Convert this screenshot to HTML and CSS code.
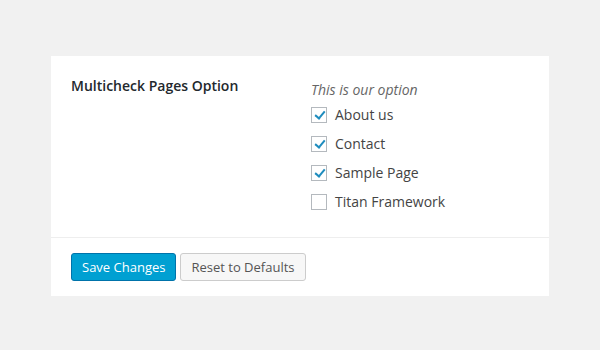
FILE: index.html
```html
<!DOCTYPE html>
<html lang="en">

<head>
    <meta charset="UTF-8">
    <meta name="viewport" content="width=device-width, initial-scale=1.0">
    <title>Multicheck Option</title>
    <link rel="stylesheet" href="styles.css">
</head>

<body>
    <div class="panel">
        <div class="option-row">
            <div class="option-label">Multicheck Pages Option</div>
            <div class="option-field">
                <p class="description">This is our option</p>
                <label class="check"><span class="box checked"></span>About us</label>
                <label class="check"><span class="box checked"></span>Contact</label>
                <label class="check"><span class="box checked"></span>Sample Page</label>
                <label class="check"><span class="box"></span>Titan Framework</label>
            </div>
        </div>
        <div class="actions">
            <button class="btn btn-primary">Save Changes</button>
            <button class="btn">Reset to Defaults</button>
        </div>
    </div>
</body>

</html>
```

FILE: styles.css
```css
body {
    margin: 0;
    padding: 56px 51px 0;
    background-color: #f1f1f1;
    font-family: "Open Sans", sans-serif;
    font-size: 14px;
    color: #444;
}

.panel {
    background-color: white;
}

.option-row {
    display: flex;
    padding: 20px 20px 21px;
    border-bottom: 1px solid #eee;
}

.option-label {
    width: 240px;
    line-height: 20px;
    font-weight: 600;
    color: #23282d;
}

.option-field {
    padding-top: 4px;
}

.description {
    margin: 0;
    line-height: 20px;
    font-style: italic;
    color: #666;
}

.check {
    display: flex;
    align-items: center;
    height: 29px;
    line-height: 20px;
    color: #444;
}

.box {
    width: 14px;
    height: 14px;
    margin-right: 8px;
    border: 1px solid #b4b9be;
    background-color: white;
    position: relative;
}

.box.checked::after {
    content: "";
    position: absolute;
    left: 5px;
    top: 1px;
    width: 4px;
    height: 8px;
    border: solid #1e8cbe;
    border-width: 0 2.5px 2.5px 0;
    transform: rotate(40deg);
}

.actions {
    display: flex;
    gap: 4px;
    padding: 15px 20px 15px;
}

.btn {
    height: 28px;
    padding: 0 10px;
    border: 1px solid #ccc;
    border-radius: 3px;
    background-color: #f7f7f7;
    color: #555;
    font-family: "Open Sans", sans-serif;
    font-size: 13px;
    cursor: pointer;
}

.btn-primary {
    background-color: #00a0d2;
    border-color: #0073aa;
    color: white;
}
```
